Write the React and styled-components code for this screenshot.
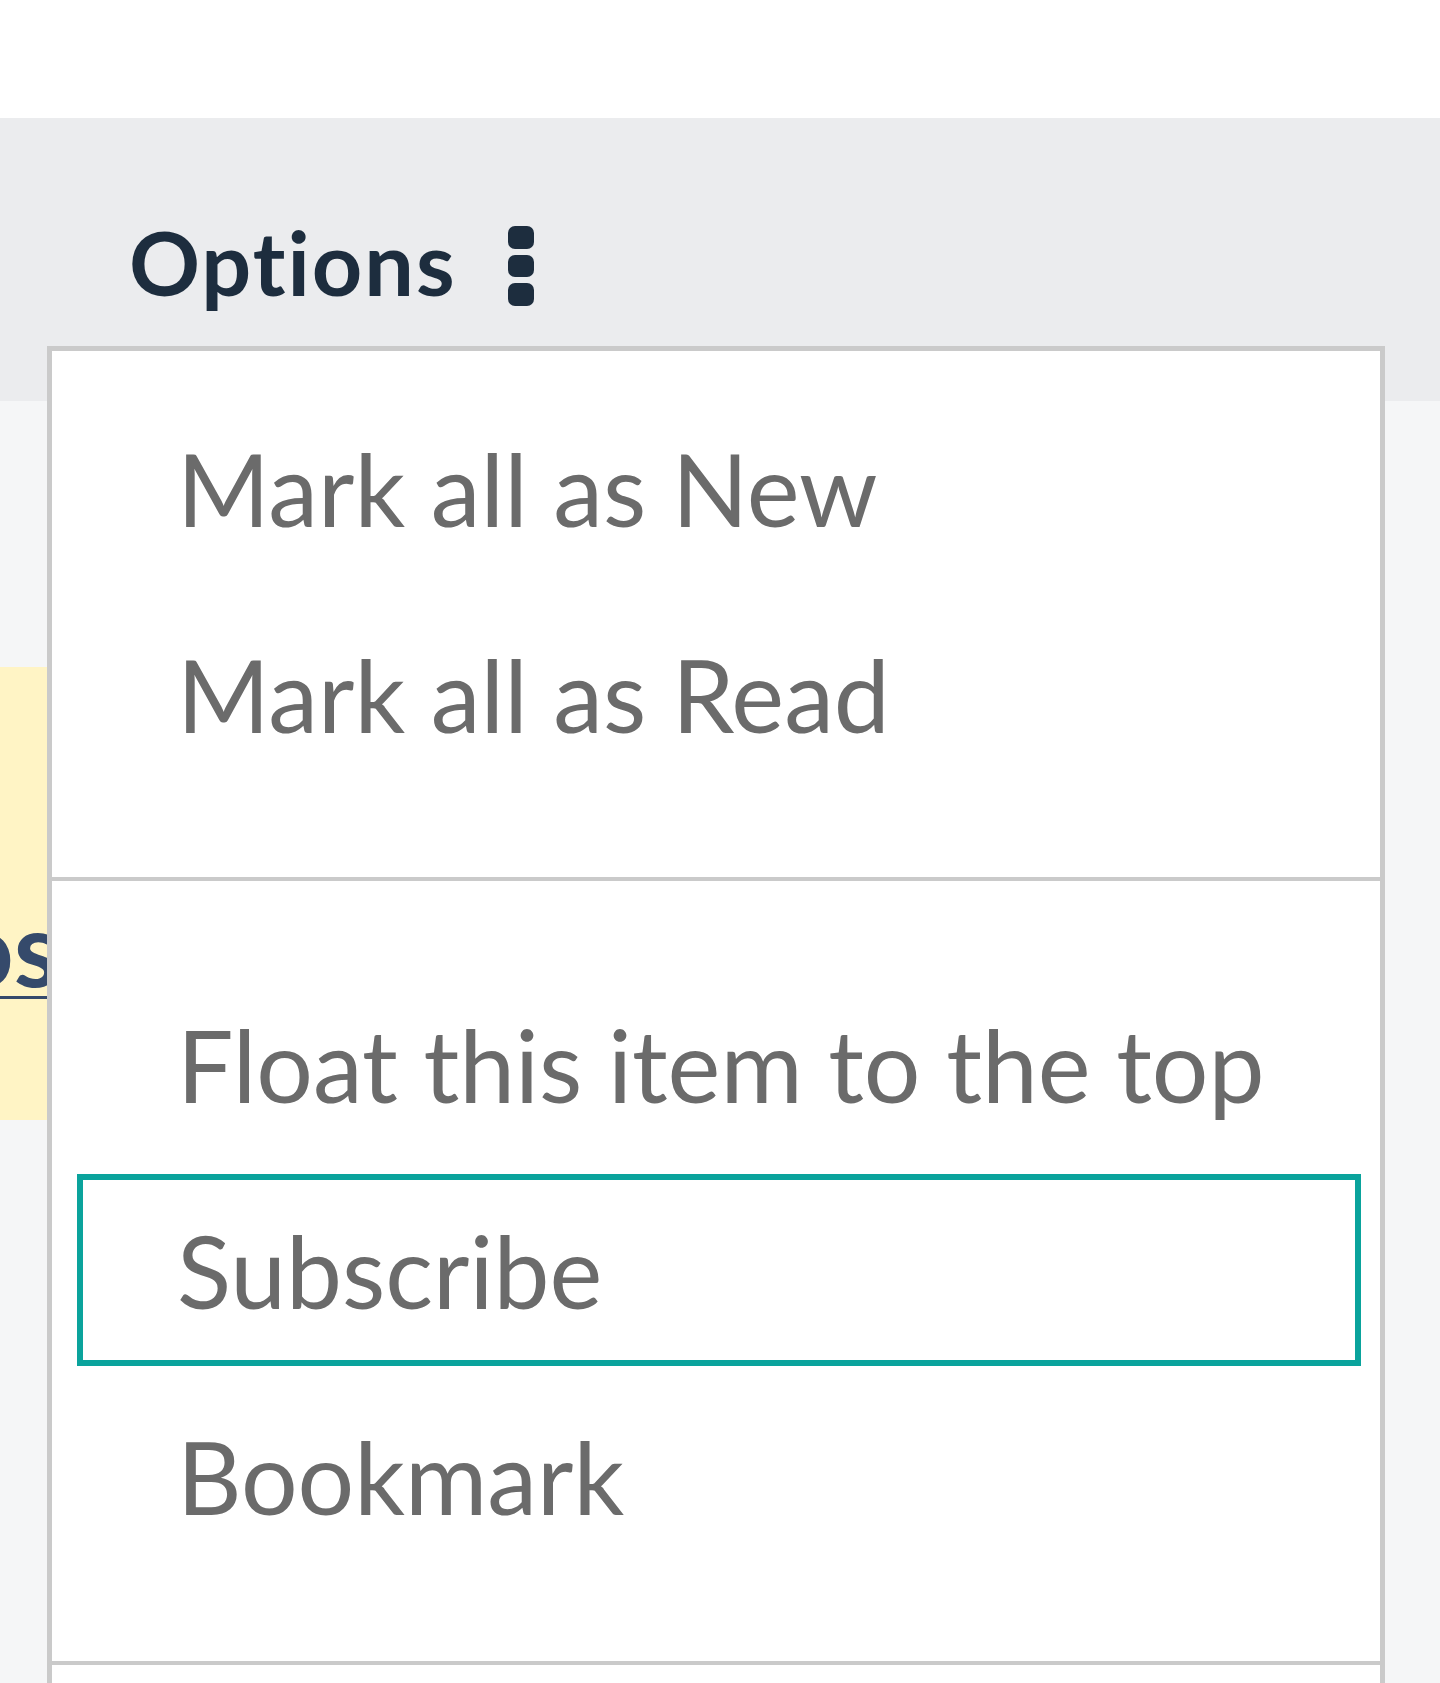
import styled, { createGlobalStyle } from "styled-components";

const GlobalStyle = createGlobalStyle`
  html, body {
    margin: 0;
    padding: 0;
    overflow: hidden;
    background: #ffffff;
    font-family: "Lato", "Liberation Sans", sans-serif;
    font-variant-ligatures: none;
  }
`;

const firstGroup = ["Mark all as New", "Mark all as Read"];
const secondGroup = ["Float this item to the top", "Subscribe", "Bookmark"];

const Kebab = () => (
  <KebabIcon viewBox="0 0 26 80" width="26" height="80" aria-hidden="true">
    <rect x="0" y="0" width="26" height="23" rx="7" />
    <rect x="0" y="29" width="26" height="22" rx="7" />
    <rect x="0" y="57" width="26" height="23" rx="7" />
  </KebabIcon>
);

const App = () => {
  return (
    <Page>
      <GlobalStyle />
      <TopStrip />
      <Toolbar>
        <OptionsButton type="button">
          Options
          <Kebab />
        </OptionsButton>
      </Toolbar>
      <Content>
        <Highlight>
          <LinkText href="#">Posts</LinkText>
        </Highlight>
      </Content>

      <Menu>
        <Group $top={33} $bottom={81}>
          {firstGroup.map((label) => (
            <Item key={label}>
              <ItemInner>{label}</ItemInner>
            </Item>
          ))}
        </Group>
        <Group $top={79} $bottom={83}>
          {secondGroup.map((label) => (
            <Item key={label}>
              <ItemInner $focused={label === "Subscribe"}>{label}</ItemInner>
            </Item>
          ))}
        </Group>
        <Group $top={120} $bottom={0} />
      </Menu>
    </Page>
  );
};

const Page = styled.div`
  position: relative;
  height: 1683px;
  overflow: hidden;
  display: flex;
  flex-direction: column;
  background: #f5f6f7;
`;

const TopStrip = styled.div`
  height: 118px;
  background: #ffffff;
`;

const Toolbar = styled.div`
  height: 283px;
  background: #ebecee;
  display: flex;
  align-items: flex-start;
  padding: 100px 0 0 129px;
  box-sizing: border-box;
`;

const OptionsButton = styled.button`
  display: flex;
  align-items: center;
  gap: 51px;
  border: none;
  background: transparent;
  padding: 0;
  font-family: "Lato", "Liberation Sans", sans-serif;
  font-variant-ligatures: none;
  font-weight: 700;
  font-size: 88px;
  letter-spacing: 2px;
  line-height: 1;
  color: #1d2d3e;
  cursor: pointer;
`;

const KebabIcon = styled.svg`
  fill: #1d2d3e;
  margin-top: 8px;
`;

const Content = styled.div`
  flex: 1;
  background: #f5f6f7;
  padding-top: 266px;
`;

const Highlight = styled.div`
  width: 420px;
  height: 453px;
  background: #fff4c5;
  box-sizing: border-box;
  padding-top: 228px;
`;

const LinkText = styled.a`
  display: block;
  margin-left: -108px;
  font-family: "Lato", "Liberation Sans", sans-serif;
  font-weight: 700;
  font-size: 104px;
  line-height: 1;
  color: #354a6b;
  text-decoration: underline;
  text-decoration-thickness: 3px;
  text-underline-offset: 9px;
`;

const Menu = styled.div`
  position: absolute;
  top: 346px;
  left: 47px;
  width: 1338px;
  box-sizing: border-box;
  border: 5px solid #cacaca;
  background: #ffffff;
`;

const Group = styled.div`
  padding: ${(p) => p.$top}px 0 ${(p) => p.$bottom}px;
  & + & {
    border-top: 4px solid #cacaca;
  }
`;

const Item = styled.div`
  height: 206px;
  box-sizing: border-box;
  padding: 8px 19px 6px 25px;
`;

const ItemInner = styled.div`
  height: 100%;
  box-sizing: border-box;
  border: 6px solid ${(p) => (p.$focused ? "#0aa39c" : "transparent")};
  display: flex;
  align-items: center;
  padding-left: 94px;
  font-family: "Lato", "Liberation Sans", sans-serif;
  font-variant-ligatures: none;
  font-size: 100px;
  line-height: 1;
  color: #6b6b6b;
  white-space: nowrap;
`;

export default App;
